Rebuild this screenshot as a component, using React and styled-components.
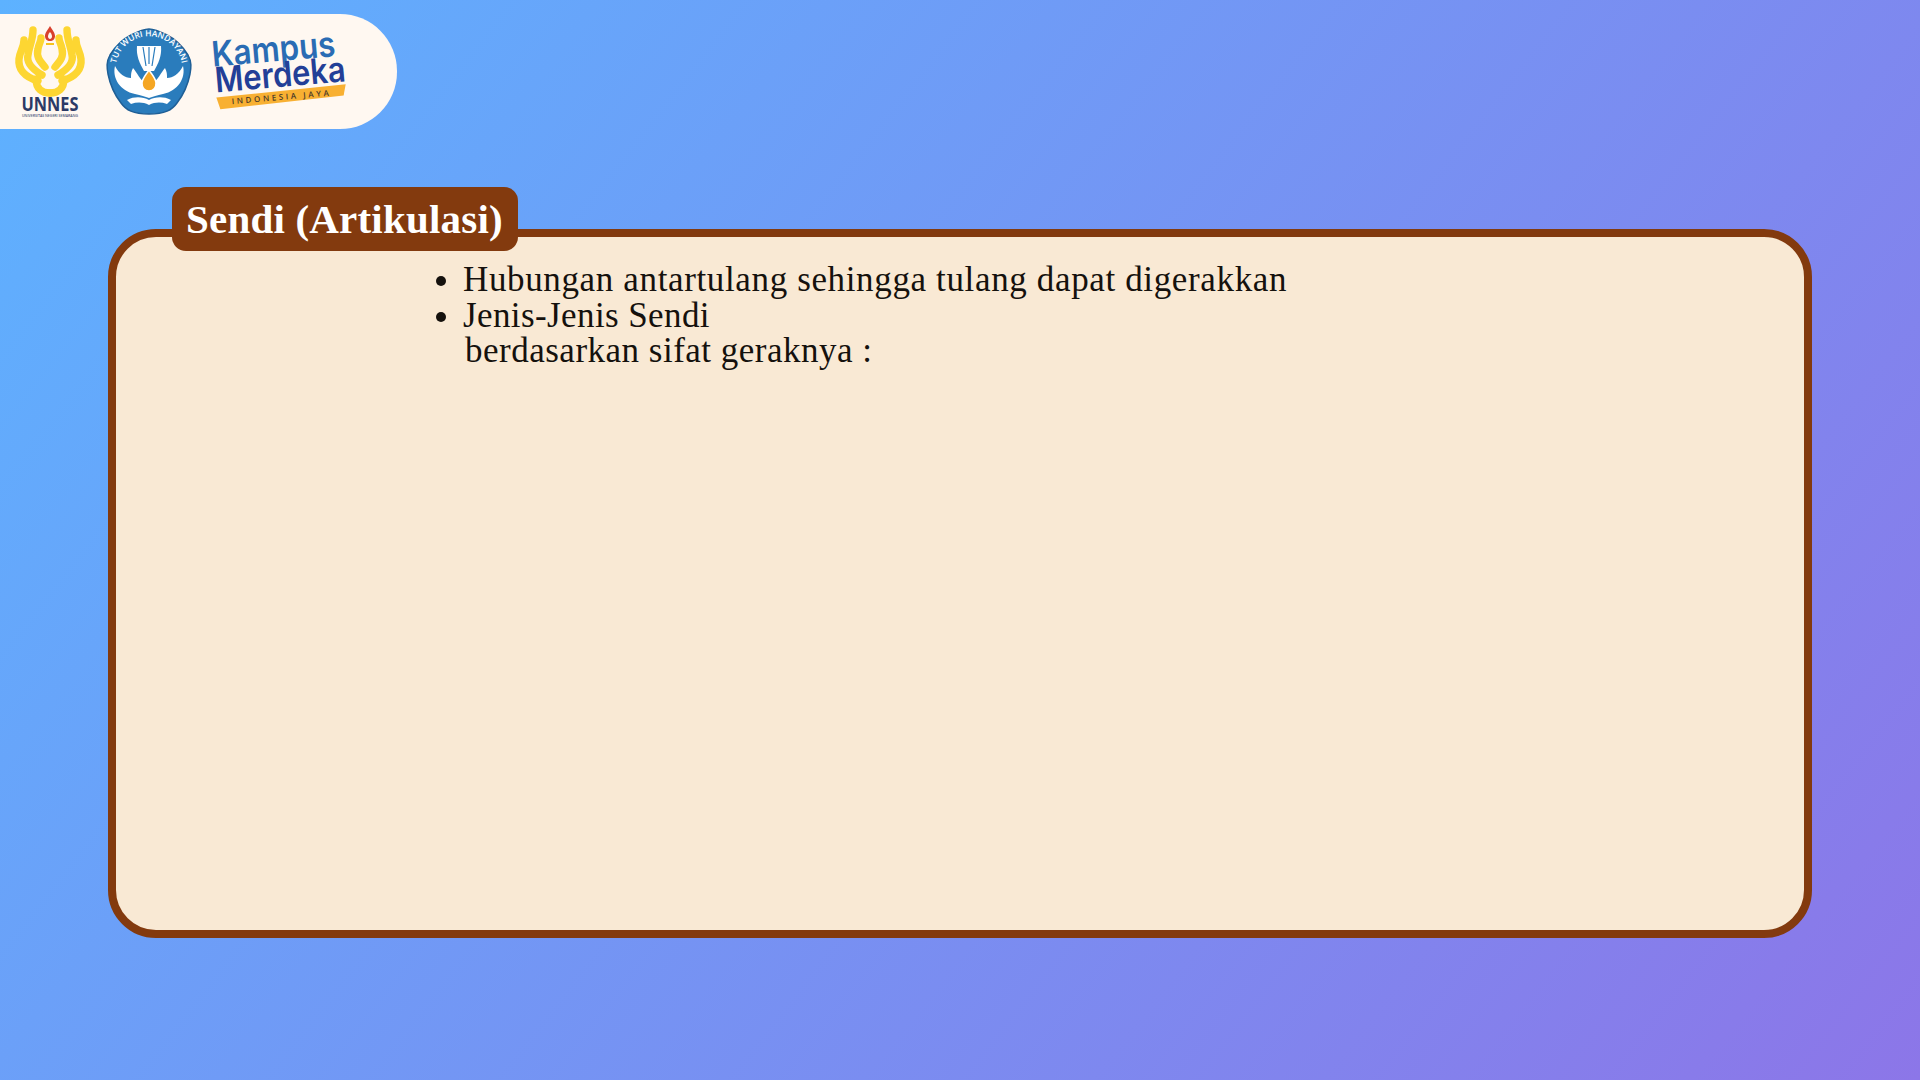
import React from 'react'
import styled, { createGlobalStyle } from 'styled-components'

const GlobalStyle = createGlobalStyle`
  html, body {
    margin: 0;
    padding: 0;
  }
`

const UNNES_RIBS = 'M24 58 C10 54 4 46 5 36 C6 28 10 24 10 17 M28 52 C18 46 12 40 14 32 C15 24 19 17 19 7 M31 44 C26 38 22 34 24 26 C25 20 27 19 27 15 M22 56 C22 66 28 70 36 70'

const UnnesLogo = () => (
  <LogoSvg width="72" height="98" viewBox="0 0 72 98">
    <path d="M36 3 C39 8 41 10 41 13 C41 16 39 18 36 18 C33 18 31 16 31 13 C31 10 33 8 36 3 Z" fill="#d8402c" />
    <path d="M36 9 C37.500 11 38 12 38 13.500 C38 15 37 16 36 16 C35 16 34 15 34 13.500 C34 12 34.500 11 36 9 Z" fill="#fff7ee" />
    <rect x="32" y="20" width="8" height="2" fill="#f6c21c" />
    <path d={UNNES_RIBS} stroke="#fdd632" strokeWidth="7.400" strokeLinecap="round" fill="none" />
    <path d={UNNES_RIBS} transform="translate(72 0) scale(-1 1)" stroke="#fdd632" strokeWidth="7.400" strokeLinecap="round" fill="none" />
    <text x="36" y="88" textAnchor="middle" fontFamily="'Open Sans', sans-serif" fontWeight="700" fontSize="20" textLength="57" lengthAdjust="spacingAndGlyphs" fill="#2c3a66">UNNES</text>
    <text x="36" y="93.500" textAnchor="middle" fontFamily="'Open Sans', sans-serif" fontWeight="600" fontSize="3" textLength="56" lengthAdjust="spacingAndGlyphs" fill="#4a5478">UNIVERSITAS NEGERI SEMARANG</text>
  </LogoSvg>
)

const TutWuriLogo = () => (
  <LogoSvg width="88" height="88" viewBox="0 0 88 88">
    <defs>
      <path id="tut-arc" d="M11 36 A33.500 33.500 0 0 1 77 36" />
    </defs>
    <path d="M44 1 C50 1 56 4 62 7 C70 11 78 19 83 27 C87 34 86 40 85 46 C83 56 79 66 72 75 C67 82 60 86 44 86 C28 86 21 82 16 75 C9 66 5 56 3 46 C2 40 1 34 5 27 C10 19 18 11 26 7 C32 4 38 1 44 1 Z" fill="#2a7cbc" stroke="#1f5f96" strokeWidth="1.500" />
    <text fontFamily="'Open Sans', sans-serif" fontWeight="600" fontSize="8.400" fill="#fff">
      <textPath href="#tut-arc" startOffset="50%" textAnchor="middle">TUT WURI HANDAYANI</textPath>
    </text>
    <path d="M32 18 L56 18 C57 28 53 36 49 43 L39 43 C35 36 31 28 32 18 Z" fill="#fff" />
    <path d="M38 19 L41 38 M44 19 L44 36 M50 19 L47 38" stroke="#2a7cbc" strokeWidth="1.200" fill="none" />
    <path d="M10 38 C7 50 15 63 30 66 C36 67 40 69 44 70 C48 69 52 67 58 66 C73 63 81 50 78 38 C74 46 68 50 62 50 C62 46 62 44 60 40 C56 44 54 52 44 58 C34 52 32 44 28 40 C26 44 26 46 26 50 C20 50 14 46 10 38 Z" fill="#fff" />
    <path d="M44 42 C48 48 51 51 51 55 C51 60 48 63 44 63 C40 63 37 60 37 55 C37 51 40 48 44 42 Z" fill="#f5a623" stroke="#fff" strokeWidth="1.500" />
    <path d="M22 72 C30 68 38 69 44 72 C50 69 58 68 66 72 L62 76 C56 74 50 74 44 77 C38 74 32 74 26 76 Z" fill="#fff" />
  </LogoSvg>
)

const KampusLogo = () => (
  <LogoSvg width="134" height="76" viewBox="0 0 134 76">
    <g transform="translate(0 -4) rotate(-5 67 38)">
      <text x="1" y="31" fontFamily="Inter, sans-serif" fontWeight="600" fontSize="35" textLength="124" lengthAdjust="spacingAndGlyphs" fill="#2a6cb4">Kampus</text>
      <text x="2" y="57" fontFamily="Inter, sans-serif" fontWeight="600" fontSize="35" textLength="131" lengthAdjust="spacingAndGlyphs" fill="#233f97">Merdeka</text>
      <path d="M2 62 L132 60 L129 71 L5 74 Z" fill="#f8b032" />
      <text x="67" y="70" textAnchor="middle" fontFamily="'Open Sans', sans-serif" fontWeight="600" fontSize="8" letterSpacing="2.600" fill="#4a3a2a">INDONESIA JAYA</text>
    </g>
  </LogoSvg>
)

const App = () => {
  return (
    <Page>
      <GlobalStyle />
      <LogoBar>
        <UnnesLogo />
        <TutWuriLogo />
        <KampusLogo />
      </LogoBar>
      <Card>
        <TitleTab>Sendi (Artikulasi)</TitleTab>
        <List>
          <Item $spacing="0.64px">Hubungan antartulang sehingga tulang dapat digerakkan</Item>
          <Item>
            Jenis-Jenis Sendi
            <Continuation>berdasarkan sifat geraknya :</Continuation>
          </Item>
        </List>
      </Card>
    </Page>
  )
}

export default App

const Page = styled.div`
  width: 100%;
  height: 100vh;
  overflow: hidden;
  padding-top: 14px;
  box-sizing: border-box;
  background: linear-gradient(128deg, #5db2ff 0%, #8c76e8 100%);
  font-family: 'Liberation Serif', serif;
`

const LogoBar = styled.div`
  width: 397px;
  height: 115px;
  box-sizing: border-box;
  padding-left: 14px;
  display: flex;
  align-items: center;
  gap: 19px;
  background: #fff8f1;
  border-radius: 0 57px 57px 0;
`

const LogoSvg = styled.svg`
  flex: none;
  overflow: visible;
`

const Card = styled.div`
  position: relative;
  width: 1704px;
  height: 709px;
  margin: 100px 0 0 108px;
  box-sizing: border-box;
  border: 8px solid #833a0e;
  border-radius: 48px;
  background: #f9e9d4;
`

const TitleTab = styled.div`
  position: absolute;
  top: -50px;
  left: 56px;
  width: 346px;
  height: 64px;
  box-sizing: border-box;
  padding-left: 14px;
  line-height: 64px;
  background: #833a0e;
  border-radius: 14px;
  color: #fff;
  font-size: 41px;
  font-weight: 700;
  letter-spacing: 0.2px;
`

const List = styled.ul`
  margin: 0;
  padding: 25px 0 0 347px;
  color: #15110d;
  font-size: 35px;
  line-height: 35.5px;
`

const Item = styled.li`
  letter-spacing: ${props => props.$spacing || '0.4px'};
`

const Continuation = styled.span`
  display: block;
  margin-left: 2px;
  letter-spacing: 0.5px;
`
